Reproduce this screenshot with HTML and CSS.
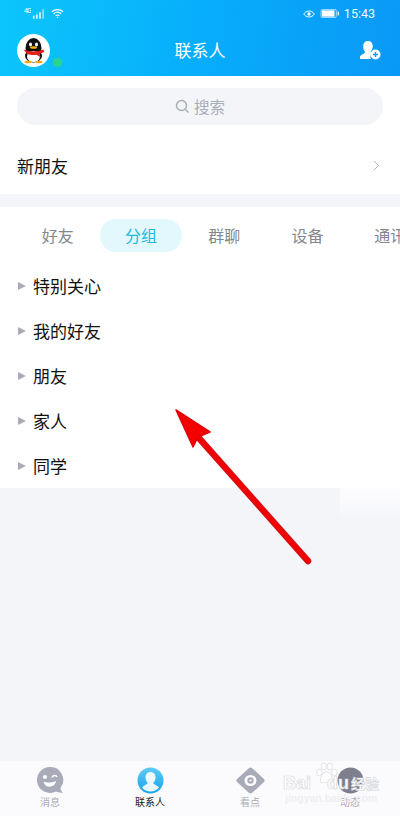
FILE: index.html
```html
<!DOCTYPE html>
<html lang="zh-CN">
<head>
  <meta charset="UTF-8" />
  <title>联系人</title>
  <meta name="viewport" content="width=device-width, initial-scale=1.0" />
  <link rel="stylesheet" href="styles.css">
</head>
<body>
  <div class="phone">
    <!-- header -->
    <header class="head">
      <div class="status">
        <div class="status-left">
          <span class="net">4G</span>
          <svg class="signal" width="13" height="10" viewBox="0 0 14 10"><path d="M1 7h1.600v3H1zM4.400 5.500h1.600V10H4.400zM7.800 3h1.600v7H7.800z" fill="#fff"/><path d="M11.200 0h1.600v10h-1.600z" fill="#fff" opacity=".6"/></svg>
          <svg class="wifi" width="13" height="11" viewBox="0 0 14 11" fill="none" stroke="#fff" stroke-width="1.200"><path d="M1 3.600C4.400.6 9.600.6 13 3.600"/><path d="M3 5.800c2.300-2 5.700-2 8 0"/><path d="M5 8c1.200-1 2.800-1 4 0"/><circle cx="7" cy="9.700" r=".7" fill="#fff" stroke="none"/></svg>
        </div>
        <div class="status-right">
          <svg width="12" height="10" viewBox="0 0 13 10" fill="none" stroke="#fff" stroke-width="1"><path d="M.8 5C3.500.7 9.500.7 12.200 5 9.500 9.300 3.500 9.300.8 5z"/><circle cx="6.500" cy="5" r="1.800" fill="#fff" stroke="none"/></svg>
          <svg class="battery" width="20" height="9" viewBox="0 0 21 10"><rect x=".5" y=".5" width="17" height="9" rx="1.500" fill="none" stroke="#fff" opacity=".7"/><rect x="1.500" y="1.500" width="14" height="7" fill="#fff"/><rect x="19" y="3" width="1.500" height="4" fill="#fff"/></svg>
          <span class="time">15:43</span>
        </div>
      </div>
      <div class="bar">
        <div class="avatar">
          <svg width="33" height="33" viewBox="0 0 33 33">
            <circle cx="16.500" cy="16.500" r="16.500" fill="#fff"/>
            <ellipse cx="16.500" cy="14" rx="8" ry="10" fill="#111"/>
            <ellipse cx="16.500" cy="22" rx="8.500" ry="6.500" fill="#111"/>
            <ellipse cx="16.500" cy="22.500" rx="6.500" ry="5.500" fill="#fff"/>
            <ellipse cx="13.500" cy="10.500" rx="1.500" ry="2" fill="#fff"/>
            <ellipse cx="19.500" cy="10.500" rx="1.500" ry="2" fill="#fff"/>
            <ellipse cx="16.500" cy="13.500" rx="3.500" ry="1.300" fill="#f2b705"/>
            <path d="M6.500 15.500c6 2.500 14 2.500 20 0l.8 2.500-4.800 1.800 1 3.500-4-2.500c-3.500.6-6.500.3-9.500-.8z" fill="#e5201c"/>
            <ellipse cx="11" cy="28" rx="3.500" ry="1.300" fill="#f2a705"/>
            <ellipse cx="22" cy="28" rx="3.500" ry="1.300" fill="#f2a705"/>
          </svg>
          <span class="online"></span>
        </div>
        <h1>联系人</h1>
        <svg class="add" width="21" height="19" viewBox="0 0 21 19">
          <path d="M8 0c3 0 4.800 2 4.800 5 0 2.200-.8 4-2 5.200-.3.800 0 1.400.8 1.800-.8 1-1.200 2.200-1.200 3.500 0 .9.200 1.700.5 2.500H0v-2c0-1.800 4.500-3.200 5.200-5-1.300-1.200-2-3.300-2-5.500C3.200 2 5 0 8 0z" fill="#fff"/>
          <circle cx="15.500" cy="13.500" r="5" fill="#fff"/>
          <path d="M15.500 11v5M13 13.500h5" stroke="#0a9bf5" stroke-width="1.300"/>
        </svg>
      </div>
    </header>

    <main class="content">
      <section class="top">
        <div class="search">
          <svg width="15" height="15" viewBox="0 0 15 15" fill="none" stroke="#a9adb8" stroke-width="1.500"><circle cx="6.500" cy="6.500" r="5"/><path d="M10.500 10.500l3 3"/></svg>
          <span>搜索</span>
        </div>
        <div class="new-friend">
          <span>新朋友</span>
          <svg width="7" height="11" viewBox="0 0 7 11" fill="none" stroke="#b4b6bd" stroke-width="1"><path d="M1 1l4.500 4.500L1 10"/></svg>
        </div>
      </section>

      <section class="contacts">
        <nav class="tabs">
          <a>好友</a>
          <a class="active">分组</a>
          <a>群聊</a>
          <a>设备</a>
          <a class="more">通讯录</a>
        </nav>
        <ul class="groups">
          <li>特别关心</li>
          <li>我的好友</li>
          <li>朋友</li>
          <li>家人</li>
          <li>同学</li>
        </ul>
      </section>
    </main>

    <!-- bottom tabs -->
    <footer class="dock">
      <div class="dock-item">
        <svg width="27" height="27" viewBox="0 0 27 27">
          <path d="M13 0a13 13 0 1 0 6 24.500c2 1 4.500 1.500 7 1-1.500-1-2.300-2.500-2.500-4.500A13 13 0 0 0 13 0z" fill="#a9abb8"/>
          <circle cx="8" cy="10" r="2" fill="#fff"/>
          <path d="M15 10.500c1-2.500 4-2.500 5-.5" fill="none" stroke="#fff" stroke-width="1.600"/>
          <path d="M6.500 14.500c3 1.500 8 1.500 12.500-.5-1 7-11 8-12.500.5z" fill="#fff"/>
        </svg>
        <span>消息</span>
      </div>
      <div class="dock-item current">
        <svg width="27" height="27" viewBox="0 0 27 27">
          <defs><linearGradient id="blue" x1="0" y1="0" x2="0" y2="1"><stop offset="0" stop-color="#5ecbf7"/><stop offset="1" stop-color="#16a4ea"/></linearGradient></defs>
          <circle cx="13.500" cy="13.500" r="13" fill="url(#blue)"/>
          <path d="M13.500 5c3.200 0 5 2.300 5 5.300 0 2.300-.9 4.300-2.200 5.500-.2 1.400 4.700 2.700 5.700 4.700a11 11 0 0 1-17 0c1-2 5.900-3.300 5.700-4.700-1.300-1.200-2.200-3.200-2.200-5.500C8.500 7.300 10.300 5 13.500 5z" fill="#fff" opacity=".9"/>
        </svg>
        <span>联系人</span>
      </div>
      <div class="dock-item">
        <svg width="29" height="27" viewBox="0 0 29 27">
          <path d="M14.500 3L26 13.500 14.500 24 3 13.500z" fill="#a9abb8" stroke="#a9abb8" stroke-width="5" stroke-linejoin="round"/>
          <ellipse cx="14.500" cy="13.500" rx="6" ry="5.500" fill="#fff"/>
          <circle cx="14.500" cy="13.500" r="3.200" fill="#a9abb8"/>
          <circle cx="14.500" cy="13.500" r="1.100" fill="#fff"/>
        </svg>
        <span>看点</span>
      </div>
      <div class="dock-item">
        <svg width="27" height="27" viewBox="0 0 27 27"><circle cx="13.500" cy="13.500" r="13" fill="#7d7f8c"/></svg>
        <span>动态</span>
      </div>
    </footer>

    <div class="fade"></div>

    <!-- annotation arrow -->
    <svg class="arrow" width="400" height="816" viewBox="0 0 400 816">
      <path d="M198 437L308 561" stroke="#d80d12" stroke-width="6.500" stroke-linecap="round" fill="none"/>
      <path d="M198 437L308 561" stroke="#f50000" stroke-width="3.500" stroke-linecap="round" fill="none"/>
      <path d="M176 410L210 432L198 437L193 447z" fill="#f50000" stroke="#e00008" stroke-width="1.500" stroke-linejoin="round"/>
    </svg>

    <!-- watermark -->
    <div class="mark">
      <svg class="paw" width="26" height="24" viewBox="0 0 32 32" fill="#fff" stroke="#d8d9de" stroke-width="1"><ellipse cx="7" cy="14" rx="3.500" ry="4.500"/><ellipse cx="13" cy="6" rx="3.500" ry="4.500"/><ellipse cx="21" cy="6" rx="3.500" ry="4.500"/><ellipse cx="27" cy="14" rx="3.500" ry="4.500"/><path d="M17 13c5 0 9 9 7 13-2 3-5 1-7 1s-6 2-8-1c-2-4 3-13 8-13z"/></svg>
      <div class="mark-name"><span class="bai">Bai</span><span class="du">du</span><span class="jy">经验</span></div>
      <div class="mark-url">jingyan.baidu.com</div>
    </div>
  </div>
</body>
</html>
```

FILE: styles.css
```css
*,*::before,*::after{box-sizing:border-box;margin:0;padding:0}
body{font-family:"Noto Sans CJK SC","Noto Sans",Roboto,sans-serif;background:#f4f5f9}
.phone{position:relative;width:400px;height:816px;overflow:hidden;display:flex;flex-direction:column;background:#f4f5f9}
/* header */
.head{height:76px;flex:none;background:linear-gradient(100deg,#0cc6fb 0%,#07abfb 55%,#0a98f6 100%);color:#fff}
.status{height:26px;display:flex;justify-content:space-between;align-items:center;padding:1px 25px 0 24px}
.status-left,.status-right{display:flex;align-items:center}
.status-left{gap:1px}
.net{font:7px/8px Roboto,sans-serif;margin-top:-5px;width:7px;overflow:hidden;white-space:nowrap;letter-spacing:-1px}
.wifi{margin-left:5px}
.battery{margin-left:5px}
.time{font:12.500px/16px Roboto,sans-serif;margin-left:4px;opacity:.95}
.bar{height:50px;display:flex;align-items:center;justify-content:space-between;padding:0 19px 2px 17px;position:relative}
.bar h1{position:absolute;left:0;right:0;text-align:center;font-size:17px;font-weight:400;line-height:52px}
.avatar{position:relative;width:33px;height:33px}
.online{position:absolute;left:36px;top:24px;width:9px;height:9px;border-radius:50%;background:#28d68a}
/* content */
.content{flex:1;display:flex;flex-direction:column;gap:13px}
.top{background:#fff;height:118px;padding:12px 17px 0}
.search{height:37px;border-radius:18px;background:#f4f5f9;display:flex;align-items:center;justify-content:center;gap:4px;color:#a9adb8;font-size:15.500px}
.search span{position:relative;top:-1px}
.new-friend{height:69px;padding-top:12px;display:flex;align-items:center;justify-content:space-between;padding-right:3px;font-size:17px;color:#111}
.contacts{background:#fff;height:281px}
.tabs{display:flex;padding:12px 0 0 16px;height:57px;white-space:nowrap;overflow:hidden}
.tabs a{flex:none;width:83.300px;height:33px;border-radius:17px;line-height:33px;text-align:center;font-size:16px;color:#85878f}
.tabs a.active{color:#22b8dc;background:#e3f8fd;background-clip:padding-box;border:solid transparent;border-width:0 1px;line-height:33px}
.tabs a.more{text-align:left;padding-left:25px}
.groups li{list-style:none;height:45px;line-height:43px;padding-left:33px;font-size:17px;color:#111;position:relative}
.groups li::before{content:"";position:absolute;left:18px;top:18px;border-left:8px solid #a9abb8;border-top:4px solid transparent;border-bottom:4px solid transparent}
/* dock */
.dock{height:55px;flex:none;background:#fbfbfd;display:grid;grid-template-columns:repeat(4,100px);padding-top:6px}
.dock-item{display:flex;flex-direction:column;align-items:center;gap:1px;font-size:10px;line-height:14px;color:#a9abb3}
.dock-item svg{flex:none}
.dock-item.current{color:#222}
/* overlays */
.fade{position:absolute;left:340px;top:488px;width:60px;height:34px;background:linear-gradient(#fdfdfe,#f4f5f9)}
.arrow{position:absolute;left:0;top:0}
.mark{position:absolute;left:283px;top:761px;width:110px;height:48px;font-family:"Liberation Sans",sans-serif}
.paw{position:absolute;left:30px;top:1px}
.mark-name{position:absolute;left:0;top:12px;font-size:18px;line-height:20px;font-weight:700;white-space:nowrap;color:#fff;-webkit-text-stroke:.6px #d4d5da}
.du{margin-left:16px}
.jy{font-family:"Noto Sans CJK SC",sans-serif;font-size:14px;margin-left:2px}
.mark-url{position:absolute;left:2px;top:31px;font-size:10.500px;line-height:12px;font-weight:700;color:#eeeef2;white-space:nowrap}
```
